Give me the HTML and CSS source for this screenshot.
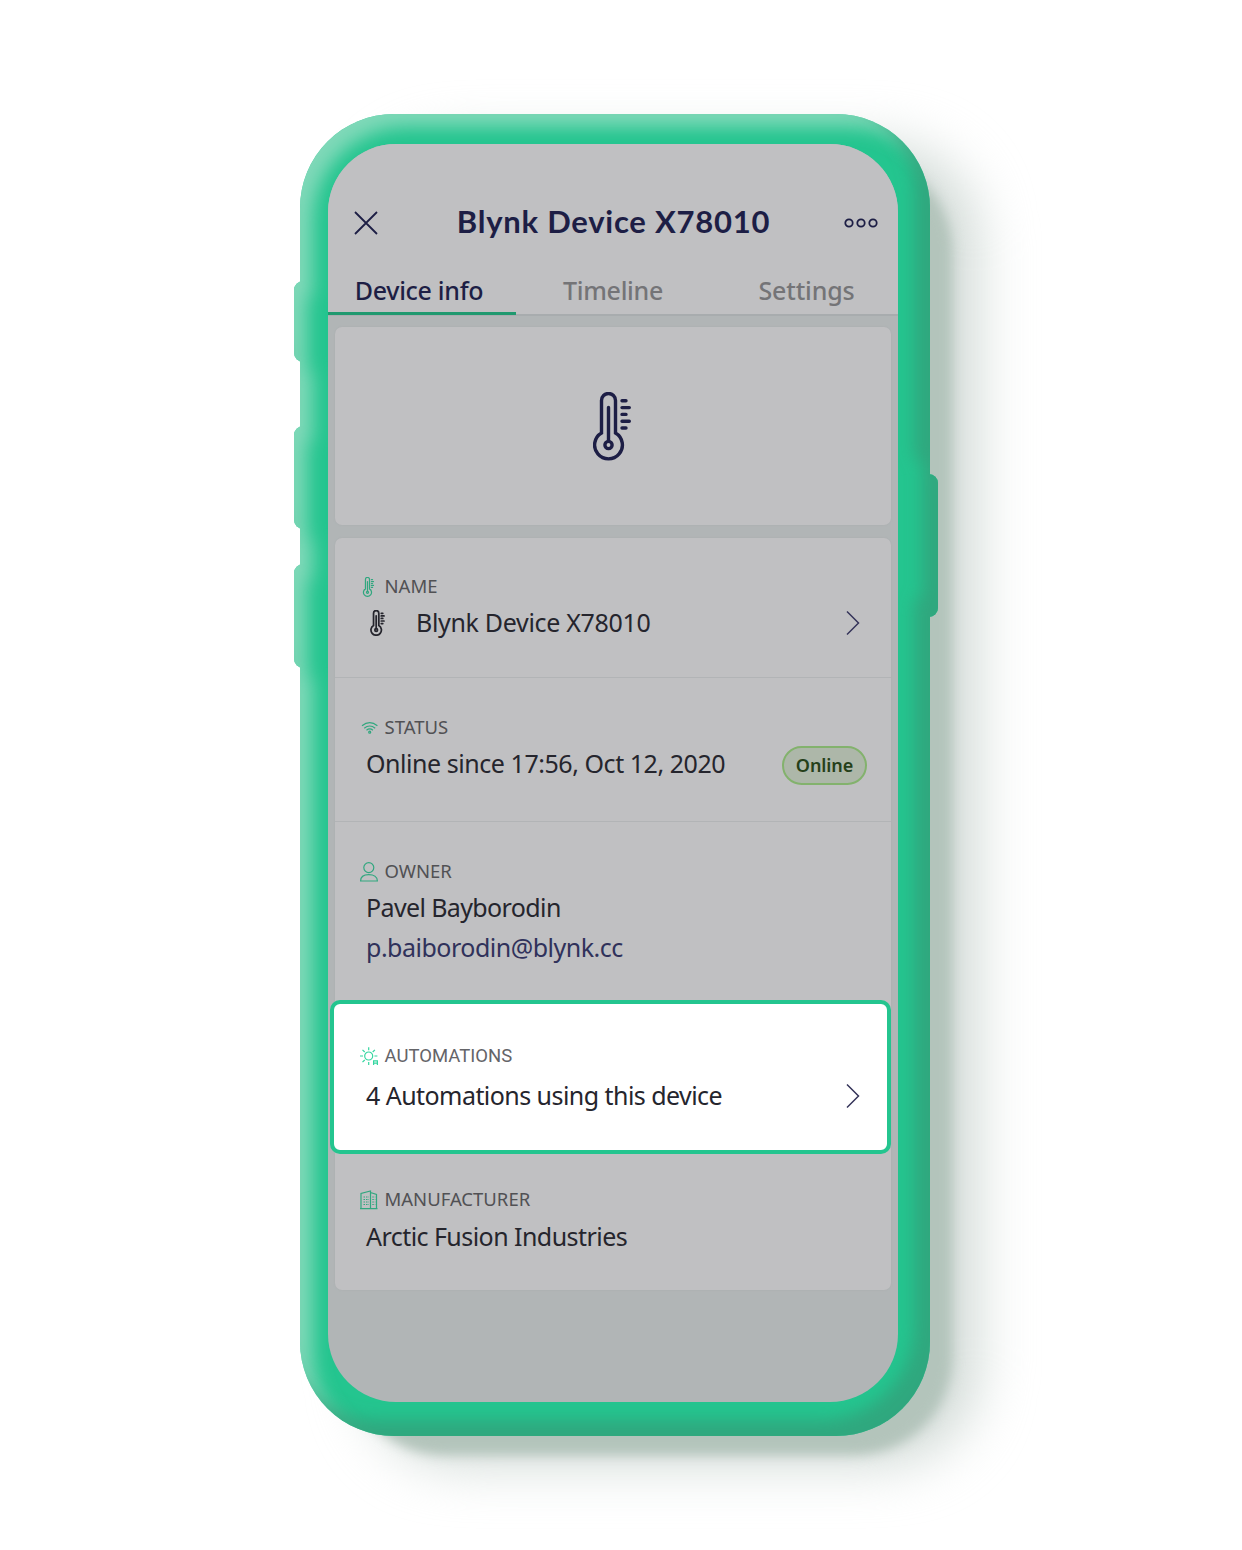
FILE: index.html
```html
<!DOCTYPE html>
<html lang="en">
<head>
<meta charset="utf-8">
<title>Blynk Device X78010</title>
<link rel="stylesheet" href="styles.css">
</head>
<body>
<svg class="defs" width="0" height="0" aria-hidden="true">
  <symbol id="thermo" viewBox="0 0 38 69">
    <g fill="none" stroke="currentColor" stroke-linecap="round">
      <path d="M8.5 41V8.5a7 7 0 0 1 14 0V41a13.9 13.9 0 1 1-14 0Z"/>
      <circle cx="15.5" cy="53" r="3.6"/>
      <path d="M15.5 49V15.5M29 8.8h4M29 15.6h7.3M29 22.4h4M29 29.2h7.3M29 36h4"/>
    </g>
  </symbol>
  <symbol id="chevron" viewBox="0 0 14 26"><path d="M1 1.5 12.5 13 1 24.5" fill="none" stroke="currentColor" stroke-width="1.5"/></symbol>
</svg>
<main class="phone">
  <svg class="shell" viewBox="0 0 900 1550" aria-hidden="true">
    <defs>
      <filter id="bevel" filterUnits="userSpaceOnUse" x="0" y="0" width="900" height="1550" color-interpolation-filters="sRGB">
        <feComponentTransfer in="SourceAlpha" result="inv"><feFuncA type="linear" slope="-1" intercept="1"/></feComponentTransfer>
        <feOffset in="inv" dx="13" dy="13"/><feGaussianBlur stdDeviation="9" result="b1"/>
        <feFlood flood-color="#90dcc0" flood-opacity=".85"/><feComposite in2="b1" operator="in"/><feComposite in2="SourceAlpha" operator="in" result="light"/>
        <feOffset in="inv" dx="-16" dy="-16"/><feGaussianBlur stdDeviation="8" result="b2"/>
        <feFlood flood-color="#31a47c" flood-opacity=".9"/><feComposite in2="b2" operator="in"/><feComposite in2="SourceAlpha" operator="in" result="dark"/>
        <feMerge><feMergeNode in="SourceGraphic"/><feMergeNode in="light"/><feMergeNode in="dark"/></feMerge>
      </filter>
      <filter id="near" filterUnits="userSpaceOnUse" x="0" y="0" width="900" height="1550" color-interpolation-filters="sRGB"><feGaussianBlur stdDeviation="6"/></filter>
      <filter id="far" filterUnits="userSpaceOnUse" x="0" y="0" width="900" height="1550" color-interpolation-filters="sRGB"><feGaussianBlur stdDeviation="27"/></filter>
    </defs>
    <rect x="165" y="144" width="612" height="1320" rx="95" fill="#d0d9d5" filter="url(#far)"/>
    <rect x="146" y="154" width="606" height="1301" rx="98" fill="#b3c4bb" filter="url(#near)"/>
    <g fill="#24c58f" filter="url(#bevel)">
      <rect x="100" y="114" width="630" height="1322" rx="94"/>
      <rect x="94" y="281" width="40" height="81" rx="9"/>
      <rect x="94" y="426" width="40" height="103" rx="9"/>
      <rect x="94" y="564" width="40" height="104" rx="9"/>
      <rect x="698" y="474" width="40" height="143" rx="9"/>
    </g>
  </svg>
  <div class="screen">
    <header class="topbar">
      <svg class="close" viewBox="0 0 24 24"><path d="M1 1 23 23M23 1 1 23"/></svg>
      <h1>Blynk Device X78010</h1>
      <svg class="more" viewBox="0 0 34 10"><circle cx="5" cy="5" r="3.7"/><circle cx="17" cy="5" r="3.7"/><circle cx="29" cy="5" r="3.7"/></svg>
    </header>
    <nav class="tabs">
      <a class="tab active">Device info</a>
      <a class="tab">Timeline</a>
      <a class="tab last">Settings</a>
    </nav>
    <section class="card hero"><svg class="hero-icon"><use href="#thermo"/></svg></section>
    <section class="card details">
      <div class="row name">
        <div class="label"><svg class="mini-thermo"><use href="#thermo"/></svg><span>NAME</span></div>
        <div class="value"><svg class="name-icon"><use href="#thermo"/></svg><span>Blynk Device X78010</span><svg class="chev"><use href="#chevron"/></svg></div>
      </div>
      <div class="row status">
        <div class="label"><svg viewBox="0 0 19 20"><g class="ico"><path d="M2 7.8q7.7-6.4 15.4 0M4.2 10.2q5.5-4.4 11 0M6.5 12.2q3.2-2.6 6.4 0"/><circle cx="9.7" cy="14.2" r="1"/></g></svg><span>STATUS</span></div>
        <div class="value"><span>Online since 17:56, Oct 12, 2020</span><b class="badge">Online</b></div>
      </div>
      <div class="row owner">
        <div class="label"><svg viewBox="0 0 19 20"><g class="ico"><circle cx="8.8" cy="5.6" r="5"/><path d="M.6 19c0-4.2 3.3-6.3 8.2-6.3s8.6 2.1 8.6 6.3Z"/></g></svg><span>OWNER</span></div>
        <div class="value person"><span>Pavel Bayborodin</span></div>
        <div class="value email"><span>p.baiborodin@blynk.cc</span></div>
      </div>
      <div class="row automations">
        <div class="label"><svg viewBox="0 0 19 20"><g class="ico"><circle cx="8.7" cy="10" r="4"/><path d="M8.7 1.2v3M8.7 16v3M0 10h3M14.4 10h3M2.5 3.8l2.2 2.2M14.9 3.8 12.7 6M2.5 16.2l2.2-2.2M13.6 19v-4.2h3.8V19M13.6 17.2h3.8"/></g></svg><span>AUTOMATIONS</span></div>
        <div class="value"><span>4 Automations using this device</span><svg class="chev"><use href="#chevron"/></svg></div>
      </div>
      <div class="row maker">
        <div class="label"><svg viewBox="0 0 19 20"><g class="ico"><path d="M0 18.7h17.5M1 18.5V3.5L10.5 1v17.5M10.5 2.5 16.5 4.5v14"/><path stroke-dasharray="1.5 1" d="M3.5 7h5.5M3.5 9.5h5.5M3.5 12h5.5M3.5 14.5h5.5M12.3 7h3M12.3 9.5h3M12.3 12h3M12.3 14.5h3"/></g></svg><span>MANUFACTURER</span></div>
        <div class="value"><span>Arctic Fusion Industries</span></div>
      </div>
    </section>
  </div>
</main>
</body>
</html>
```
FILE: styles.css
```css
* { box-sizing: border-box; }
body { margin: 0; min-height: 1550px; padding: 114px 0 0 300px; background: #fff; font-family: "Noto Sans", sans-serif; color: #25252d; }
svg { display: block; flex: none; }
.defs { position: absolute; }

.phone { position: relative; width: 630px; height: 1322px; padding: 30px 32px 34px 28px; }
.shell { position: absolute; left: -100px; top: -114px; width: 900px; height: 1550px; overflow: visible; }
.screen { position: relative; height: 1258px; border-radius: 68px; overflow: hidden; background: #b1b5b6; }

.topbar { display: flex; align-items: center; height: 122px; padding: 49px 20px 13px 26px; background: #c0c0c2; color: #1d1e45; }
.close, .more { fill: none; stroke: currentColor; stroke-width: 1.8; }
.close { width: 24px; height: 24px; }
.more { width: 34px; height: 10px; }
h1 { flex: 1; margin: 0; padding: 0 0 3px 5px; text-align: center; font: 700 31px/57px Lato, sans-serif; letter-spacing: .76px; white-space: nowrap; }

.tabs { display: grid; grid-template-columns: 188px 1fr 188px; height: 50px; border-bottom: 2px solid #a8acae; background: #c0c0c2; color: #747477; font-size: 25px; font-weight: 500; line-height: 48px; letter-spacing: -.3px; text-align: center; }
.tab { height: 49px; }
.active { padding-right: 6px; border-bottom: 3px solid #20996f; color: #1d1e45; }
.last { padding-left: 5px; letter-spacing: -.15px; }

.card { width: 556px; margin-left: 7px; border-radius: 7px; background: #c0c0c2; box-shadow: 0 0 2px #a8abad; }
.hero { display: flex; align-items: center; justify-content: center; height: 198px; margin-top: 11px; padding-right: 2px; color: #1d1e45; stroke-width: 3.4; }
.hero-icon { width: 38px; height: 69px; }
.details { margin-top: 13px; }

.row { padding-left: 25px; padding-right: 31px; }
.label { display: flex; align-items: center; gap: 5.5px; height: 24px; margin-bottom: 4px; color: #515154; font-size: 18.5px; }
.label span { padding-bottom: 3px; }
.label svg { width: 19px; height: 20px; color: #31a77f; }
.ico { fill: none; stroke: currentColor; stroke-width: 1.2; }
.label .mini-thermo { width: 17px; margin-right: 2px; stroke-width: 4.2; }
.value { display: flex; align-items: center; height: 40px; padding-left: 6px; font-size: 25px; letter-spacing: -.55px; white-space: nowrap; }
.value span { padding-bottom: 2px; }
.chev { width: 14px; height: 26px; margin-left: auto; color: #35345a; }

.name { height: 140px; padding-top: 37px; border-bottom: 1px solid #b2b4b6; }
.name .value { letter-spacing: -.32px; }
.name-icon { width: 15px; height: 26px; margin: 0 31px 0 4px; stroke-width: 4.6; }

.status { height: 144px; padding-top: 38px; padding-right: 24px; border-bottom: 1px solid #b2b4b6; }
.status .value { letter-spacing: -.45px; }
.badge { width: 85px; height: 39px; margin: 2px 0 0 auto; border: 2px solid #83b26d; border-radius: 20px; background: #adb7a9; color: #254019; font-size: 18px; font-weight: 600; line-height: 34px; letter-spacing: -.1px; text-align: center; }

.owner { height: 178px; padding-top: 38px; }
.person { letter-spacing: -.62px; }
.email { letter-spacing: -.5px; color: #30325b; }

.automations { width: 561px; height: 154px; margin-left: -5px; padding: 40px 27px 0 26px; border: 4px solid #24c58f; border-radius: 10px; background: #fff; }
.automations .label { margin-bottom: 8px; color: #646468; font-family: Roboto, sans-serif; }
.automations .label span { padding-bottom: 0; }
.automations .label svg { color: #35d6a0; }

.maker { height: 136px; padding-top: 34px; }
.maker .label { margin-bottom: 5px; }
```
